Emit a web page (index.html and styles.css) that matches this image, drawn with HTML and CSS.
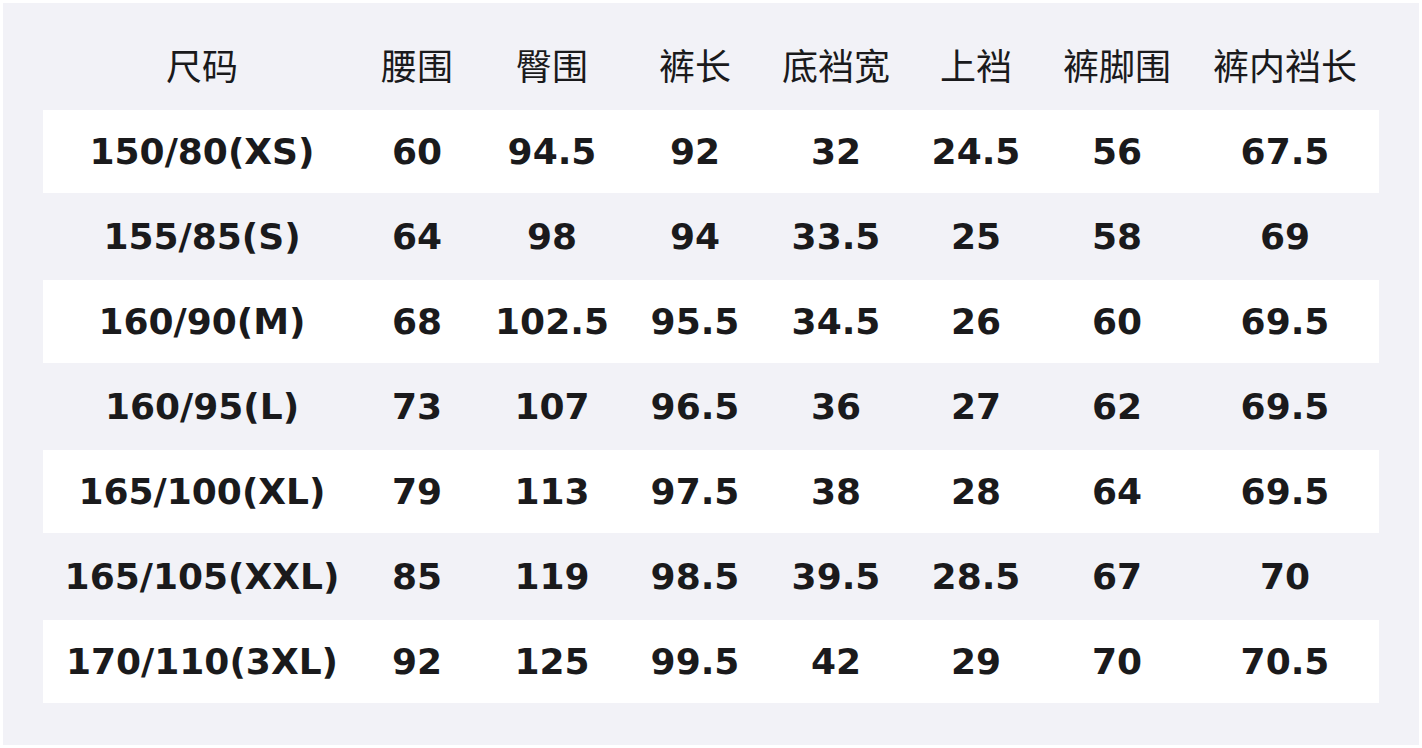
FILE: index.html
```html
<!DOCTYPE html>
<html lang="zh">
<head>
<meta charset="utf-8">
<title>尺码表</title>
<link rel="stylesheet" href="styles.css">
</head>
<body>
<div class="panel">
  <div class="row head">
    <div>尺码</div><div>腰围</div><div>臀围</div><div>裤长</div><div>底裆宽</div><div>上裆</div><div>裤脚围</div><div>裤内裆长</div>
  </div>
  <div class="row white"><div>150/80(XS)</div><div>60</div><div>94.5</div><div>92</div><div>32</div><div>24.5</div><div>56</div><div>67.5</div></div>
  <div class="row"><div>155/85(S)</div><div>64</div><div>98</div><div>94</div><div>33.5</div><div>25</div><div>58</div><div>69</div></div>
  <div class="row white"><div>160/90(M)</div><div>68</div><div>102.5</div><div>95.5</div><div>34.5</div><div>26</div><div>60</div><div>69.5</div></div>
  <div class="row"><div>160/95(L)</div><div>73</div><div>107</div><div>96.5</div><div>36</div><div>27</div><div>62</div><div>69.5</div></div>
  <div class="row white"><div>165/100(XL)</div><div>79</div><div>113</div><div>97.5</div><div>38</div><div>28</div><div>64</div><div>69.5</div></div>
  <div class="row"><div>165/105(XXL)</div><div>85</div><div>119</div><div>98.5</div><div>39.5</div><div>28.5</div><div>67</div><div>70</div></div>
  <div class="row white"><div>170/110(3XL)</div><div>92</div><div>125</div><div>99.5</div><div>42</div><div>29</div><div>70</div><div>70.5</div></div>
</div>
</body>
</html>
```

FILE: styles.css
```css
html, body {
  margin: 0;
  padding: 0;
  background: #ffffff;
}
body {
  padding: 3px;
  width: 1422px;
  height: 748px;
  box-sizing: border-box;
}
.panel {
  background: #f2f2f7;
  height: 742px;
  padding: 0 40px 40px 40px;
  box-sizing: border-box;
}
.row {
  display: grid;
  grid-template-columns: 318px 112px 158px 128px 154px 126px 156px 180px;
  height: 83px;
  margin-bottom: 2px;
  align-items: center;
  font-family: "DejaVu Sans", "Noto Sans CJK SC", sans-serif;
  font-weight: bold;
  font-size: 36px;
  color: #1a1a1c;
}
.row > div {
  text-align: center;
  white-space: nowrap;
}
.row.white {
  background: #ffffff;
}
.row.head {
  height: auto;
  margin-bottom: 0;
  padding-top: 35px;
  padding-bottom: 20px;
  line-height: 52px;
  font-family: "Noto Sans CJK SC", sans-serif;
  font-weight: 400;
  font-size: 36px;
  color: #1a1a1c;
}
```
